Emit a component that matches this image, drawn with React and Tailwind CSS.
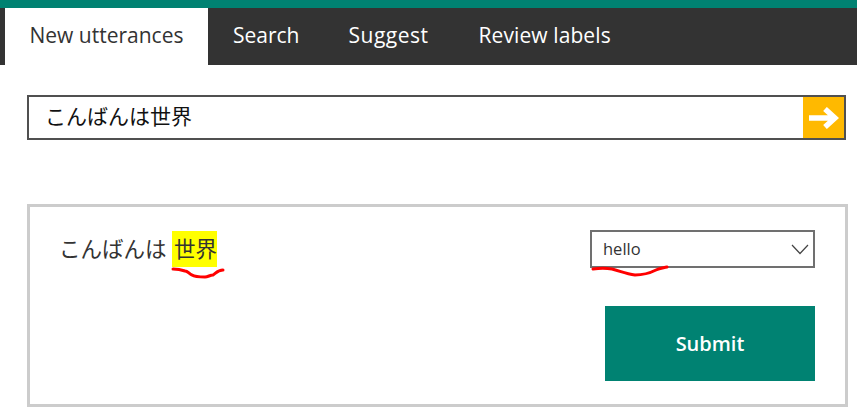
import React from 'react';

function App() {
  return (
    <div className="w-[857px] h-[415px] bg-white overflow-hidden font-['Open_Sans','Noto_Sans_CJK_JP',sans-serif]">
      <div className="h-2 bg-[#008272]" />

      {/* Tabs */}
      <div className="h-[57px] bg-[#333333] pl-[5px] flex text-[21px] text-white">
        <div className="w-[203px] bg-white text-[#333333] flex items-center justify-center pb-[2px]">New utterances</div>
        <div className="ml-[25px] flex items-center pb-[2px]">Search</div>
        <div className="ml-[49px] flex items-center pb-[2px] tracking-[0.5px]">Suggest</div>
        <div className="ml-[50px] flex items-center pb-[2px] tracking-[0.1px]">Review labels</div>
      </div>

      <div className="pl-[27px]">
        {/* Search box */}
        <div className="mt-[30px] w-[819px] h-[45px] border-2 border-[#505050] flex items-stretch">
          <div className="flex-1 pl-[16px] pb-[2px] flex items-center text-[21px] leading-none text-[#111111]">こんばんは世界</div>
          <button className="w-[41px] bg-[#ffb900] flex items-center justify-center">
            <svg width="30" height="22" viewBox="0 0 30 22" fill="none">
              <path d="M0 11H26M16 2L26 11L16 20" stroke="white" strokeWidth="5.5" />
            </svg>
          </button>
        </div>

        {/* Utterance card */}
        <div className="relative mt-16 w-[821px] h-[203px] border-[3px] border-[#cccccc] pl-[30px] pr-[30px] pt-[23px]">
          <div className="flex justify-between items-start">
            <div className="flex items-center text-[21.5px] leading-none text-[#333333] h-[36px] mt-px -ml-[1px]">
              <span>こんばんは</span>
              <span className="ml-[5.5px] bg-[#ffff00] h-[36px] pl-[2px] flex items-center">世界</span>
            </div>
            <div className="w-[225px] h-[38px] border-2 border-[#707070] pl-[11px] pr-1 pt-px flex items-center justify-between text-[16.5px] text-[#333333]">
              <span>hello</span>
              <svg width="18" height="11" viewBox="0 0 18 11" fill="none">
                <path d="M1 1L9 9.5L17 1" stroke="#444444" strokeWidth="1.2" />
              </svg>
            </div>
          </div>
          <div className="flex justify-end mt-[38px]">
            <button className="w-[210px] h-[75px] bg-[#008272] text-white text-[20px] font-semibold">Submit</button>
          </div>

          {/* Hand drawn red underlines */}
          <svg className="absolute left-[140px] top-[58px]" width="60" height="20" viewBox="0 0 60 20" fill="none">
            <path d="M3 4C8 4 12 5 15 6C18 6 19 9 22 10C25 12 30 12 35 12C38 12 40 10 43 10C46 8 48 5 53 5" stroke="#ff0000" strokeWidth="3" strokeLinecap="round" />
          </svg>
          <svg className="absolute left-[560px] top-[58px]" width="80" height="16" viewBox="0 0 80 16" fill="none">
            <path d="M3 4C10 3 16 3 22 4C30 6 36 9 45 10C52 10 60 8 66 5C70 3 73 3 77 2" stroke="#ff0000" strokeWidth="3" strokeLinecap="round" />
          </svg>
        </div>
      </div>
    </div>
  );
}

export default App;
